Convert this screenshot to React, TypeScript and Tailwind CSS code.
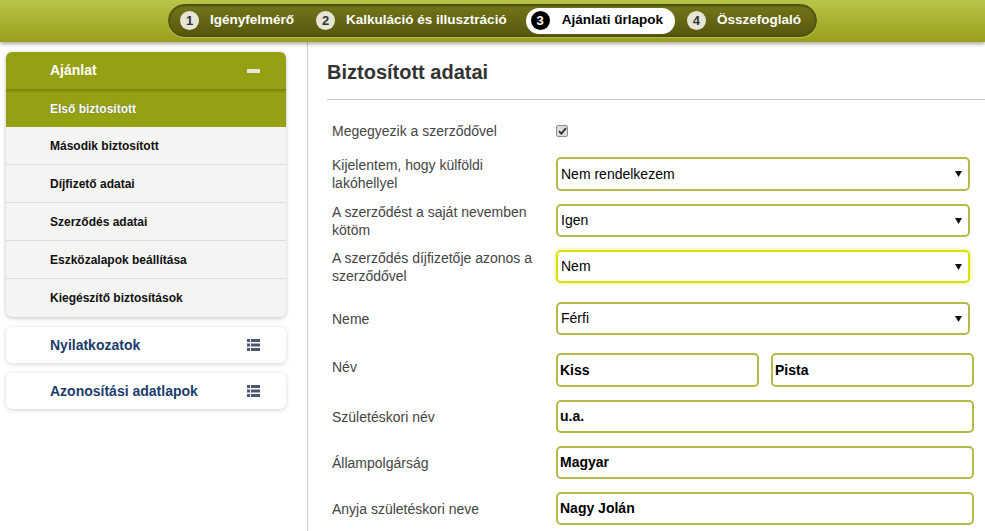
import React from "react";

function NumCircle({ n, active }: { n: number; active?: boolean }) {
  return (
    <span
      className={
        active
          ? "w-[19px] h-[19px] rounded-full bg-black text-white text-[13px] font-bold flex items-center justify-center leading-none"
          : "w-[19px] h-[19px] rounded-full bg-[#e6e6d6] text-[#333] text-[13px] font-bold flex items-center justify-center leading-none"
      }
    >
      {n}
    </span>
  );
}

function ListIcon() {
  return (
    <svg width="13" height="12" viewBox="0 0 13 12" className="block">
      <rect x="0" y="0" width="3" height="3" fill="#4b5672" />
      <rect x="4" y="0" width="9" height="3" fill="#4b5672" />
      <rect x="0" y="4.5" width="3" height="3" fill="#4b5672" />
      <rect x="4" y="4.5" width="9" height="3" fill="#4b5672" />
      <rect x="0" y="9" width="3" height="3" fill="#4b5672" />
      <rect x="4" y="9" width="9" height="3" fill="#4b5672" />
    </svg>
  );
}

function Arrow() {
  return (
    <svg width="7" height="6" viewBox="0 0 7 6" className="block">
      <path d="M0 0 H7 L3.5 6 Z" fill="#111" />
    </svg>
  );
}

function SelectBox({ value, focus }: { value: string; focus?: boolean }) {
  return (
    <div
      className={
        focus
          ? "w-[414px] h-full rounded-[5px] border-2 border-[#d8e400] shadow-[0_0_4px_rgba(200,215,0,0.6)] bg-white flex items-center justify-between pl-[3px] pr-[6px] text-[14px] text-black"
          : "w-[414px] h-full rounded-[5px] border-2 border-[#b4ba46] bg-white flex items-center justify-between pl-[3px] pr-[6px] text-[14px] text-black"
      }
    >
      <span>{value}</span>
      <Arrow />
    </div>
  );
}

function TextBox({ value, w }: { value: string; w: string }) {
  return (
    <div
      className={`${w} h-full rounded-[5px] border-2 border-[#b4ba46] bg-white flex items-center pl-[2px] text-[14px] font-bold text-black`}
    >
      {value}
    </div>
  );
}

function Row({
  label,
  mt,
  h,
  children,
}: {
  label: React.ReactNode;
  mt: string;
  h: string;
  children: React.ReactNode;
}) {
  return (
    <div className={`flex items-center ${mt} ${h}`}>
      <div className="w-[224px] shrink-0 text-[14px] leading-[18px] text-[#444]">{label}</div>
      {children}
    </div>
  );
}

const sideItems = [
  "Második biztosított",
  "Díjfizető adatai",
  "Szerződés adatai",
  "Eszközalapok beállítása",
  "Kiegészítő biztosítások",
];

export default function App() {
  return (
    <div className="w-[985px] h-[531px] overflow-hidden bg-white font-['Liberation_Sans',Arial,sans-serif] flex flex-col">
      <header className="relative z-10 h-[42px] shrink-0 bg-gradient-to-b from-[#bac448] to-[#9aa019] shadow-[0_2px_4px_rgba(0,0,0,0.35)] flex justify-center pt-[4px]">
        <nav className="h-[33px] rounded-full bg-gradient-to-b from-[#747519] to-[#56570d] border border-[#4a4b0a] shadow-[inset_0_1px_2px_rgba(0,0,0,0.4),0_1px_0_rgba(255,255,255,0.25)] flex items-center pl-[11px] pr-[15px] text-[13.5px] font-bold text-white">
          <div className="flex items-center gap-[11px]">
            <NumCircle n={1} />
            <span>Igényfelmérő</span>
          </div>
          <div className="flex items-center gap-[11px] ml-[22px]">
            <NumCircle n={2} />
            <span>Kalkuláció és illusztráció</span>
          </div>
          <div className="flex items-center gap-[12px] ml-[19px] h-[26px] bg-white rounded-full pl-[5px] pr-[12px] text-black">
            <NumCircle n={3} active />
            <span>Ajánlati űrlapok</span>
          </div>
          <div className="flex items-center gap-[11px] ml-[12px]">
            <NumCircle n={4} />
            <span>Összefoglaló</span>
          </div>
        </nav>
      </header>

      <div className="flex flex-1 min-h-0">
        <aside className="w-[308px] shrink-0 border-r border-[#cfcfcf] pl-[6px] pt-[10px]">
          <div className="w-[280px] rounded-[6px] overflow-hidden shadow-[0_1px_4px_rgba(0,0,0,0.25)] bg-[#f4f4f2]">
            <div className="h-[37px] bg-[#95a012] flex items-center justify-between pl-[44px] pr-[26px]">
              <span className="text-white text-[14px] font-bold">Ajánlat</span>
              <span className="w-[13px] h-[4px] bg-[#e6e8d8]" />
            </div>
            <div className="h-[38px] bg-[#95a012] border-t border-[#7b850c] shadow-[inset_0_2px_2px_rgba(0,0,0,0.12)] flex items-center pl-[44px]">
              <span className="text-white text-[12px] font-bold [text-shadow:0_0_1px_rgba(40,60,120,0.6)]">
                Első biztosított
              </span>
            </div>
            {sideItems.map((t, i) => (
              <div
                key={t}
                className={
                  i < sideItems.length - 1
                    ? "h-[38px] border-b border-[#dcdcdc] flex items-center pl-[44px]"
                    : "h-[38px] flex items-center pl-[44px]"
                }
              >
                <span className="text-[#111] text-[12px] font-bold">{t}</span>
              </div>
            ))}
          </div>

          <div className="w-[280px] h-[36px] mt-[10px] rounded-[6px] bg-white shadow-[0_1px_5px_rgba(0,0,0,0.18)] flex items-center justify-between pl-[44px] pr-[26px]">
            <span className="text-[#1c3c6c] text-[14px] font-bold">Nyilatkozatok</span>
            <ListIcon />
          </div>
          <div className="w-[280px] h-[36px] mt-[10px] rounded-[6px] bg-white shadow-[0_1px_5px_rgba(0,0,0,0.18)] flex items-center justify-between pl-[44px] pr-[26px]">
            <span className="text-[#1c3c6c] text-[14px] font-bold">Azonosítási adatlapok</span>
            <ListIcon />
          </div>
        </aside>

        <main className="flex-1 min-w-0 pl-[19px]">
          <h1 className="mt-[17px] h-[26px] leading-[26px] text-[20px] font-bold text-[#333]">
            Biztosított adatai
          </h1>
          <div className="mt-[14px] border-t border-[#cccccc]" />

          <div className="pl-[5px]">
            <Row label="Megegyezik a szerződővel" mt="mt-[21px]" h="h-[20px]">
              <div className="w-[12px] h-[12px] rounded-[2px] border border-[#8f8f8f] bg-[#dcdcdc] flex items-center justify-center">
                <svg width="9" height="8" viewBox="0 0 9 8">
                  <path d="M1 4.2 L3.4 6.6 L8 1.2" stroke="#333" strokeWidth="1.8" fill="none" />
                </svg>
              </div>
            </Row>
            <Row
              label={
                <>
                  Kijelentem, hogy külföldi
                  <br />
                  lakóhellyel
                </>
              }
              mt="mt-[16px]"
              h="h-[34px]"
            >
              <SelectBox value="Nem rendelkezem" />
            </Row>
            <Row
              label={
                <>
                  A szerződést a saját nevemben
                  <br />
                  kötöm
                </>
              }
              mt="mt-[13px]"
              h="h-[33px]"
            >
              <SelectBox value="Igen" />
            </Row>
            <Row
              label={
                <>
                  A szerződés díjfizetője azonos a
                  <br />
                  szerződővel
                </>
              }
              mt="mt-[13px]"
              h="h-[33px]"
            >
              <SelectBox value="Nem" focus />
            </Row>
            <Row label="Neme" mt="mt-[19px]" h="h-[33px]">
              <SelectBox value="Férfi" />
            </Row>
            <Row label={<span className="relative top-[-3px]">Név</span>} mt="mt-[18px]" h="h-[34px]">
              <div className="flex gap-[12px] h-full">
                <TextBox value="Kiss" w="w-[203px]" />
                <TextBox value="Pista" w="w-[203px]" />
              </div>
            </Row>
            <Row label="Születéskori név" mt="mt-[13px]" h="h-[33px]">
              <TextBox value="u.a." w="w-[418px]" />
            </Row>
            <Row label="Állampolgárság" mt="mt-[13px]" h="h-[33px]">
              <TextBox value="Magyar" w="w-[418px]" />
            </Row>
            <Row label="Anyja születéskori neve" mt="mt-[13px]" h="h-[33px]">
              <TextBox value="Nagy Jolán" w="w-[418px]" />
            </Row>
          </div>
        </main>
      </div>
    </div>
  );
}
